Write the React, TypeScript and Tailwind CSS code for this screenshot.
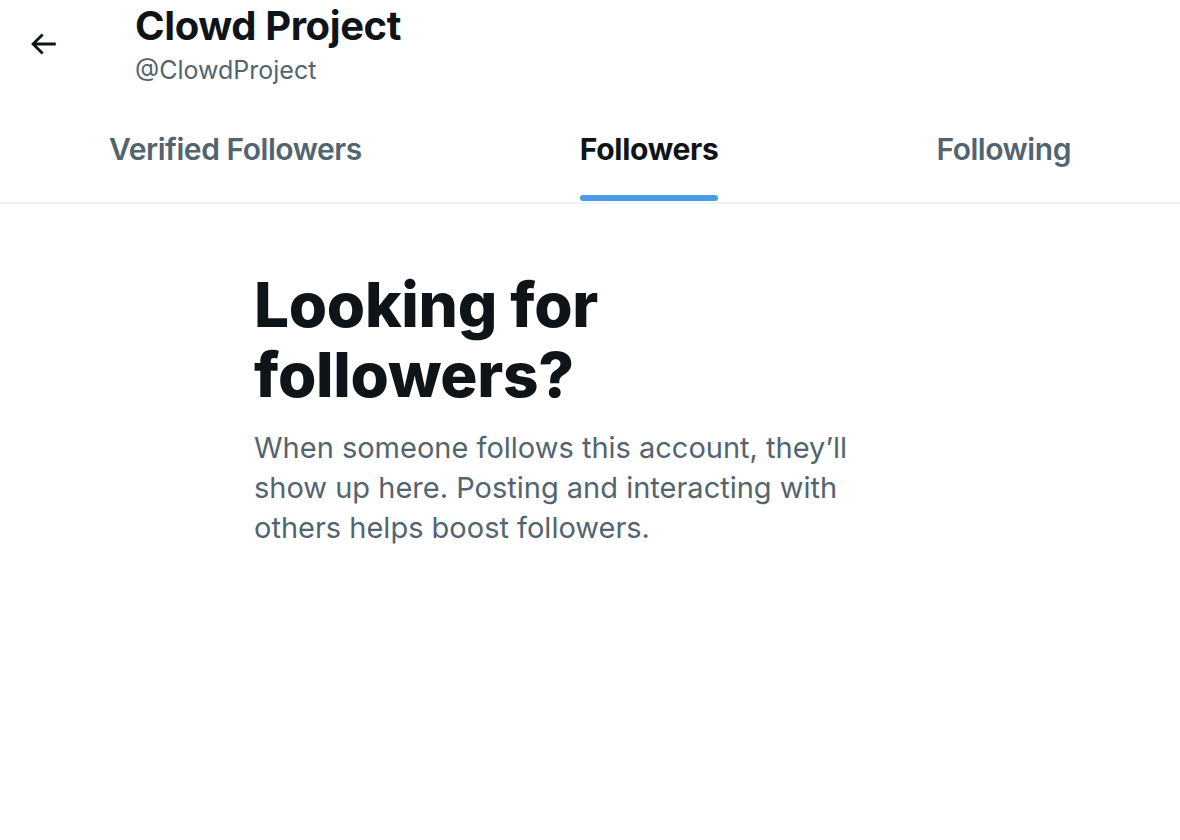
import React, { useState } from "react";

const tabs = ["Verified Followers", "Followers", "Following"];

function BackArrow() {
  return (
    <svg viewBox="0 0 24 24" className="h-[34px] w-[34px] text-[#0f1419]" fill="currentColor">
      <path d="M7.414 13l5.043 5.04-1.414 1.42L3.586 12l7.457-7.46 1.414 1.42L7.414 11H21v2H7.414z" />
    </svg>
  );
}

export default function App() {
  const [active, setActive] = useState("Followers");

  return (
    <div className="min-h-[840px] w-full bg-white font-['Inter',sans-serif] text-[#0f1419]">
      {/* header */}
      <div className="flex items-start h-[104px]">
        <button className="ml-[26px] mt-[27px] flex h-[34px] w-[34px] items-center justify-center">
          <BackArrow />
        </button>
        <div className="ml-[75px] mt-[1px] flex flex-col">
          <h1 className="text-[40px] leading-[50px] font-bold tracking-[-0.01em]">Clowd Project</h1>
          <span className="mt-[3px] text-[25px] leading-[32px] text-[#536471]">@ClowdProject</span>
        </div>
      </div>

      {/* tabs */}
      <nav className="flex justify-around border-b-2 border-[#eff3f4]">
        {tabs.map((t) => (
          <button
            key={t}
            onClick={() => setActive(t)}
            className="flex flex-col items-center"
          >
            <span
              className={
                "pt-[26px] pb-[27px] text-[30px] leading-[38px] " +
                (t === active
                  ? "text-[#0f1419] font-bold tracking-[-0.01em]"
                  : "text-[#536471] font-semibold tracking-[-0.015em]")
              }
            >
              {t}
            </span>
            <span
              className={
                "mb-[1px] h-[6px] w-full rounded-full " + (t === active ? "bg-[#4a9ae8]" : "bg-transparent")
              }
            />
          </button>
        ))}
      </nav>

      {/* empty state */}
      <section className="ml-[254px] mt-[66px] max-w-[620px]">
        <h2 className="text-[62px] leading-[70px] font-extrabold tracking-[-0.005em]">
          Looking for followers?
        </h2>
        <p className="mt-[18px] text-[29px] leading-[40px] text-[#536471]">
          When someone follows this account, they’ll show up here. Posting and interacting with
          others helps boost followers.
        </p>
      </section>
    </div>
  );
}
